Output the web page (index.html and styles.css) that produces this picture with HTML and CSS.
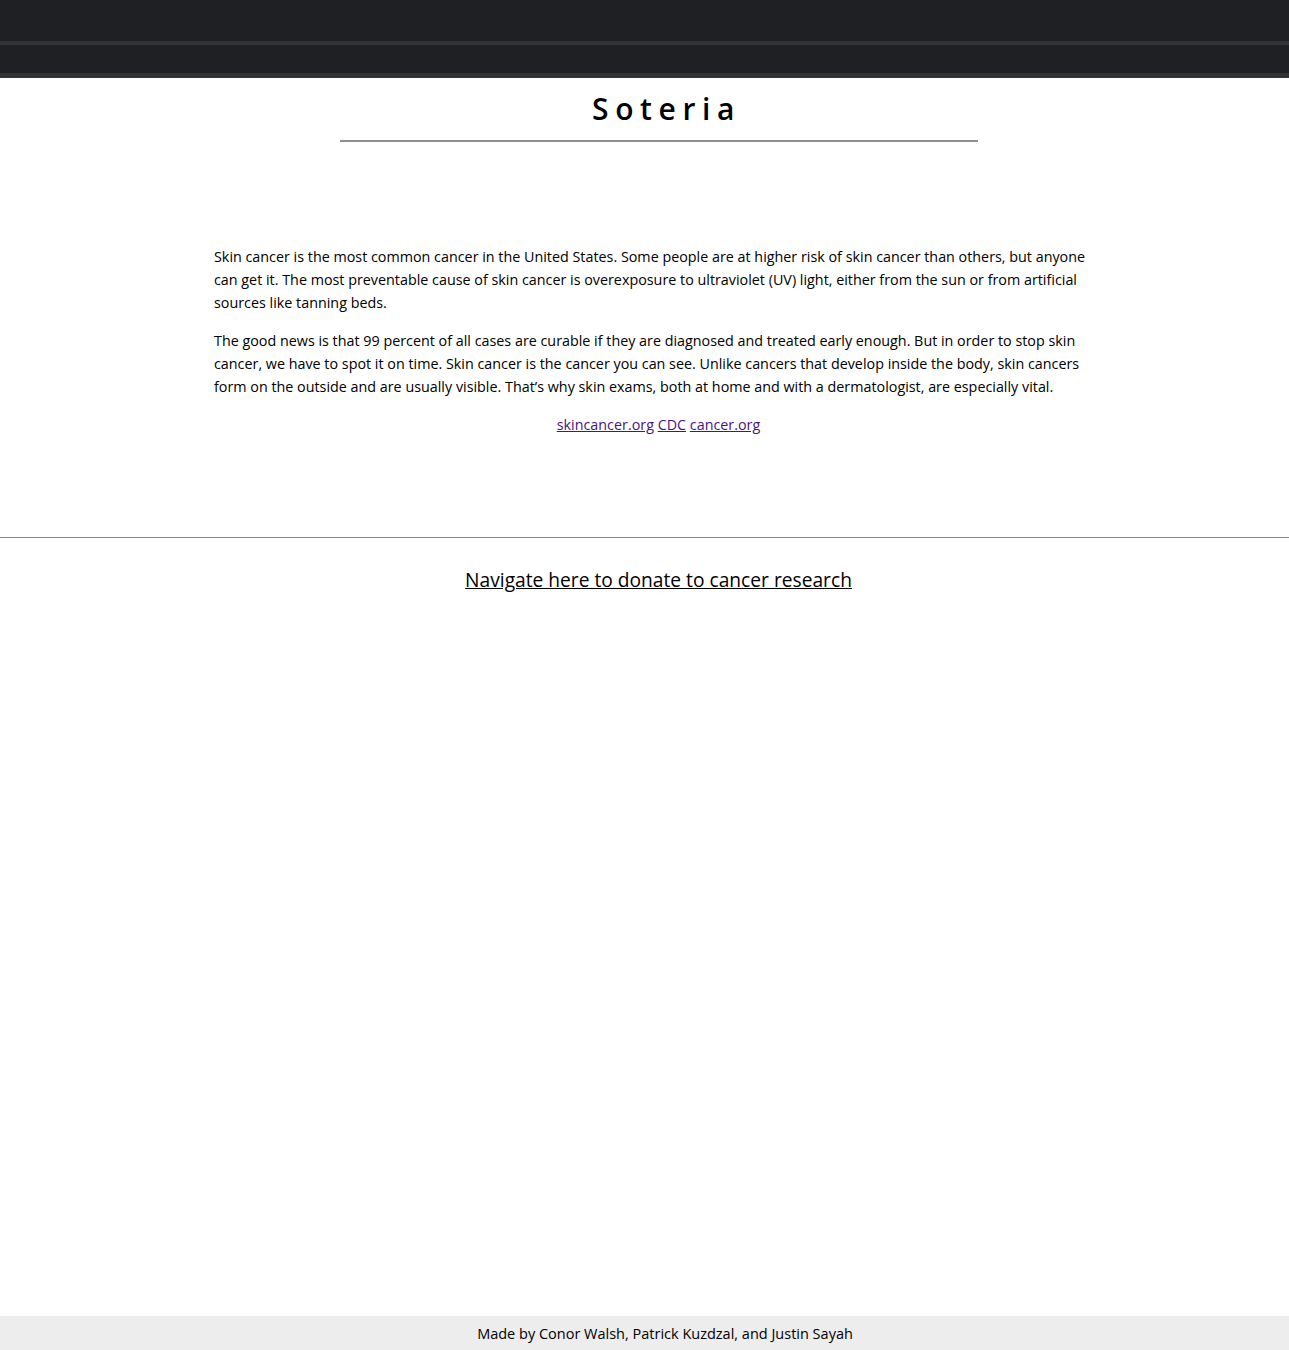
FILE: index.html
```html
<!DOCTYPE html>
<html>
<head>
<meta charset="utf-8">
<link rel="stylesheet" href="styles.css">
</head>
<body>
<header class="topbar">
  <div class="bar-top"></div>
  <div class="bar-sep"></div>
  <div class="bar-bottom"></div>
  <div class="bar-edge"></div>
</header>
<main class="page">
  <div class="title-wrap">
    <h1 class="title">Soteria</h1>
  </div>
  <section class="info">
    <p>Skin cancer is the most common cancer in the United States. Some people are at higher risk of skin cancer than others, but anyone can get it. The most preventable cause of skin cancer is overexposure to ultraviolet (UV) light, either from the sun or from artificial sources like tanning beds.</p>
    <p>The good news is that 99 percent of all cases are curable if they are diagnosed and treated early enough. But in order to stop skin cancer, we have to spot it on time. Skin cancer is the cancer you can see. Unlike cancers that develop inside the body, skin cancers form on the outside and are usually visible. That’s why skin exams, both at home and with a dermatologist, are especially vital.</p>
    <p class="sources"><a href="#">skincancer.org</a> <a href="#">CDC</a> <a href="#">cancer.org</a></p>
  </section>
  <hr class="divider">
  <div class="donate"><a href="#">Navigate here to donate to cancer research</a></div>
</main>
<footer class="footer">Made by Conor Walsh, Patrick Kuzdzal, and Justin Sayah</footer>
</body>
</html>
```
FILE: styles.css
```css
html, body {
  margin: 0;
  padding: 0;
}
body {
  font-family: "Open Sans", "Liberation Sans", sans-serif;
  color: #000;
  background: #fff;
  min-height: 1350px;
  display: flex;
  flex-direction: column;
}
.topbar {
  display: flex;
  flex-direction: column;
}
.bar-top { height: 41px; background: #1f2023; }
.bar-sep { height: 4px; background: #333336; }
.bar-bottom { height: 28px; background: #1f2023; }
.bar-edge { height: 5px; background: #333336; }
.page {
  flex: 1;
  display: flex;
  flex-direction: column;
}
.title-wrap {
  width: 638px;
  margin: 0 0 0 340px;
  border-bottom: 2px solid #8e8e8e;
  text-align: center;
}
.title {
  margin: 0;
  padding: 13px 0 13px 15px;
  font-size: 30px;
  line-height: 36px;
  font-weight: 600;
  letter-spacing: 6.6px;
}
.info {
  width: 889px;
  margin: 103px 0 0 214px;
  font-size: 14.34px;
  line-height: 23px;
}
.info p {
  margin: 0 0 15px 0;
}
.info .sources {
  text-align: center;
}
.sources a {
  color: #4b1280;
}
.divider {
  margin: 86px 0 0 0;
  border: 0;
  border-top: 1px solid #8a8a8a;
  height: 0;
}
.donate {
  text-align: center;
  padding: 27px 0 0 28px;
  font-size: 19.2px;
  line-height: 30px;
}
.donate a {
  color: #000;
}
.footer {
  background: #ededed;
  height: 34px;
  line-height: 36px;
  text-align: center;
  padding-left: 41px;
  font-size: 14.5px;
}
```
